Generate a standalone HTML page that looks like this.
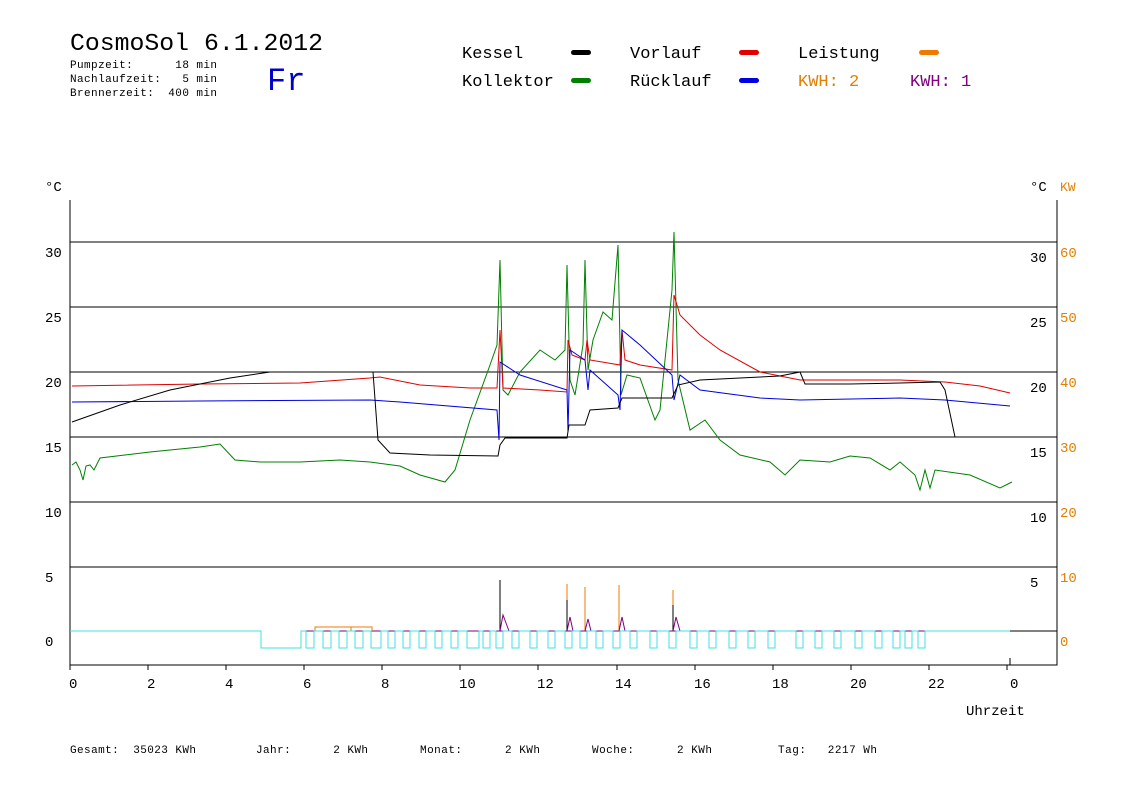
<!DOCTYPE html>
<html><head><meta charset="utf-8"><style>
html,body{margin:0;padding:0;background:#fff;width:1148px;height:812px;overflow:hidden}
svg{display:block}
text{font-family:"Liberation Mono",monospace;white-space:pre}
</style></head><body>
<svg width="1148" height="812" viewBox="0 0 1148 812" xmlns="http://www.w3.org/2000/svg">
<rect width="1148" height="812" fill="#fff"/>
<text x="70" y="50" font-size="24" fill="#000" textLength="253" lengthAdjust="spacingAndGlyphs">CosmoSol 6.1.2012</text>
<text x="70" y="68" font-size="11" fill="#000" textLength="147">Pumpzeit:      18 min</text>
<text x="70" y="82" font-size="11" fill="#000" textLength="147">Nachlaufzeit:   5 min</text>
<text x="70" y="96" font-size="11" fill="#000" textLength="147">Brennerzeit:  400 min</text>
<text x="267" y="90" font-size="32" fill="#0000cc">Fr</text>
<g font-size="17">
<text x="462" y="58">Kessel</text><rect x="571" y="50" width="20" height="5" rx="2.5" fill="#000"/>
<text x="630" y="58">Vorlauf</text><rect x="739" y="50" width="20" height="5" rx="2.5" fill="#e00000"/>
<text x="798" y="58">Leistung</text><rect x="919" y="50" width="20" height="5" rx="2.5" fill="#f07800"/>
<text x="462" y="86">Kollektor</text><rect x="571" y="78" width="20" height="5" rx="2.5" fill="#008000"/>
<text x="630" y="86">Rücklauf</text><rect x="739" y="78" width="20" height="5" rx="2.5" fill="#0000e0"/>
<text x="798" y="86" fill="#e08000">KWH: 2</text>
<text x="910" y="86" fill="#800080">KWH: 1</text>
</g>
<g font-size="14">
<text x="45" y="191">°C</text><text x="1030" y="191">°C</text><text x="1060" y="191" fill="#e08000" font-size="13">KW</text>
<text x="45" y="257">30</text><text x="45" y="322">25</text><text x="45" y="387">20</text><text x="45" y="452">15</text><text x="45" y="517">10</text><text x="45" y="582">5</text><text x="45" y="646">0</text>
<text x="1030" y="262">30</text><text x="1030" y="327">25</text><text x="1030" y="392">20</text><text x="1030" y="457">15</text><text x="1030" y="522">10</text><text x="1030" y="587">5</text>
<g fill="#e08000"><text x="1060" y="257">60</text><text x="1060" y="322">50</text><text x="1060" y="387">40</text><text x="1060" y="452">30</text><text x="1060" y="517">20</text><text x="1060" y="582">10</text><text x="1060" y="646">0</text></g>
<text x="69" y="688">0</text><text x="147" y="688">2</text><text x="225" y="688">4</text><text x="303" y="688">6</text><text x="381" y="688">8</text><text x="459" y="688">10</text><text x="537" y="688">12</text><text x="615" y="688">14</text><text x="694" y="688">16</text><text x="772" y="688">18</text><text x="850" y="688">20</text><text x="928" y="688">22</text><text x="1010" y="688">0</text>
<text x="966" y="715">Uhrzeit</text>
</g>
<g font-size="11"><text x="70" y="753" textLength="126">Gesamt:  35023 KWh</text><text x="256" y="753" textLength="112">Jahr:      2 KWh</text><text x="420" y="753" textLength="120">Monat:      2 KWh</text><text x="592" y="753" textLength="120">Woche:      2 KWh</text><text x="778" y="753" textLength="99">Tag:   2217 Wh</text></g>
<g stroke="#000" stroke-width="1" fill="none">
<path d="M70 200V665H1057V200M70 242H1057M70 307H1057M70 372H1057M70 437H1057M70 502H1057M70 567H1057"/>
<path d="M70 665v5M148 665v5M226 665v5M304 665v5M382 665v5M460 665v5M538 665v5M617 665v5M695 665v5M773 665v5M851 665v5M929 665v5M1007 665v5M1010 658v7"/>
<path d="M1010 631H1057"/>
</g>
<polyline fill="none" stroke="#008000" points="72,465 76,462 80,470 83,480 86,466 90,465 94,470 100,458 150,452 200,447 220,444 235,460 260,462 300,462 340,460 370,462 400,466 420,475 445,482 455,470 470,420 490,365 497,345 500,260 503,390 508,395 520,372 540,350 555,360 565,350 567,265 570,380 575,395 583,345 585,260 588,370 593,340 603,312 612,320 618,245 621,395 627,375 640,378 655,420 660,410 672,290 674,232 678,380 690,430 705,420 720,440 740,455 770,462 785,475 800,460 830,462 850,456 870,458 890,470 900,462 915,475 920,490 925,470 930,488 935,470 970,475 1000,488 1012,482"/>
<polyline fill="none" stroke="#e00000" points="72,386 200,384 300,383 370,378 380,377 420,385 470,388 497,388 500,330 503,388 540,390 567,392 568,340 572,355 585,360 587,340 590,360 620,365 622,330 625,360 640,365 672,370 674,295 680,315 700,335 720,350 760,372 800,380 900,380 945,382 980,386 1010,393"/>
<polyline fill="none" stroke="#0000e0" points="72,402 200,401 370,400 400,402 497,410 499,440 500,362 520,375 567,390 568,432 570,350 585,360 588,390 590,370 618,395 620,410 622,330 640,345 672,375 674,400 680,375 700,390 760,398 800,400 900,398 945,400 1010,406"/>
<polyline fill="none" stroke="#000" points="72,422 120,405 170,390 230,378 270,372 373,372 378,440 390,453 430,455 498,456 500,445 505,438 567,438 569,425 585,425 590,410 618,408 622,398 672,398 678,385 700,380 740,378 780,376 800,372 805,384 850,384 900,383 940,382 945,390 955,437 988,437"/>
<polyline fill="none" stroke="#800080" points="301,631 1010,631"/>
<path fill="none" stroke="#f07800" d="M315 631V627H372V631M351 627v4M567 631V584M585 631V587M619 631V585M673 631V590"/>
<path fill="none" stroke="#000" d="M500 631V580M567 631V600M673 631V605"/>
<path fill="none" stroke="#800080" d="M500 631l3-16 3 8 3 8M567 631l3-14 3 14M585 631l3-12 3 12M619 631l3-14 3 14M673 631l3-14 4 14"/>
<path fill="none" stroke="#40e0e0" d="M70 631H261V648H301V631H306V648H314V631H323V648H331V631H339V648H347V631H355V648H363V631H371V648H381V631H388V648H395V631H403V648H410V631H419V648H426V631H435V648H442V631H451V648H458V631H467V648H479V631H483V648H490V631H496V648H503V631H512V648H519V631H530V648H537V631H548V648H555V631H565V648H572V631H580V648H587V631H596V648H603V631H613V648H620V631H630V648H637V631H650V648H657V631H669V648H676V631H690V648H697V631H709V648H716V631H729V648H736V631H748V648H755V631H768V648H775V631H796V648H803V631H815V648H822V631H834V648H841V631H855V648H862V631H875V648H882V631H893V648H900V631H905V648H912V631H918V648H925V631H1010"/>
</svg>
</body></html>
